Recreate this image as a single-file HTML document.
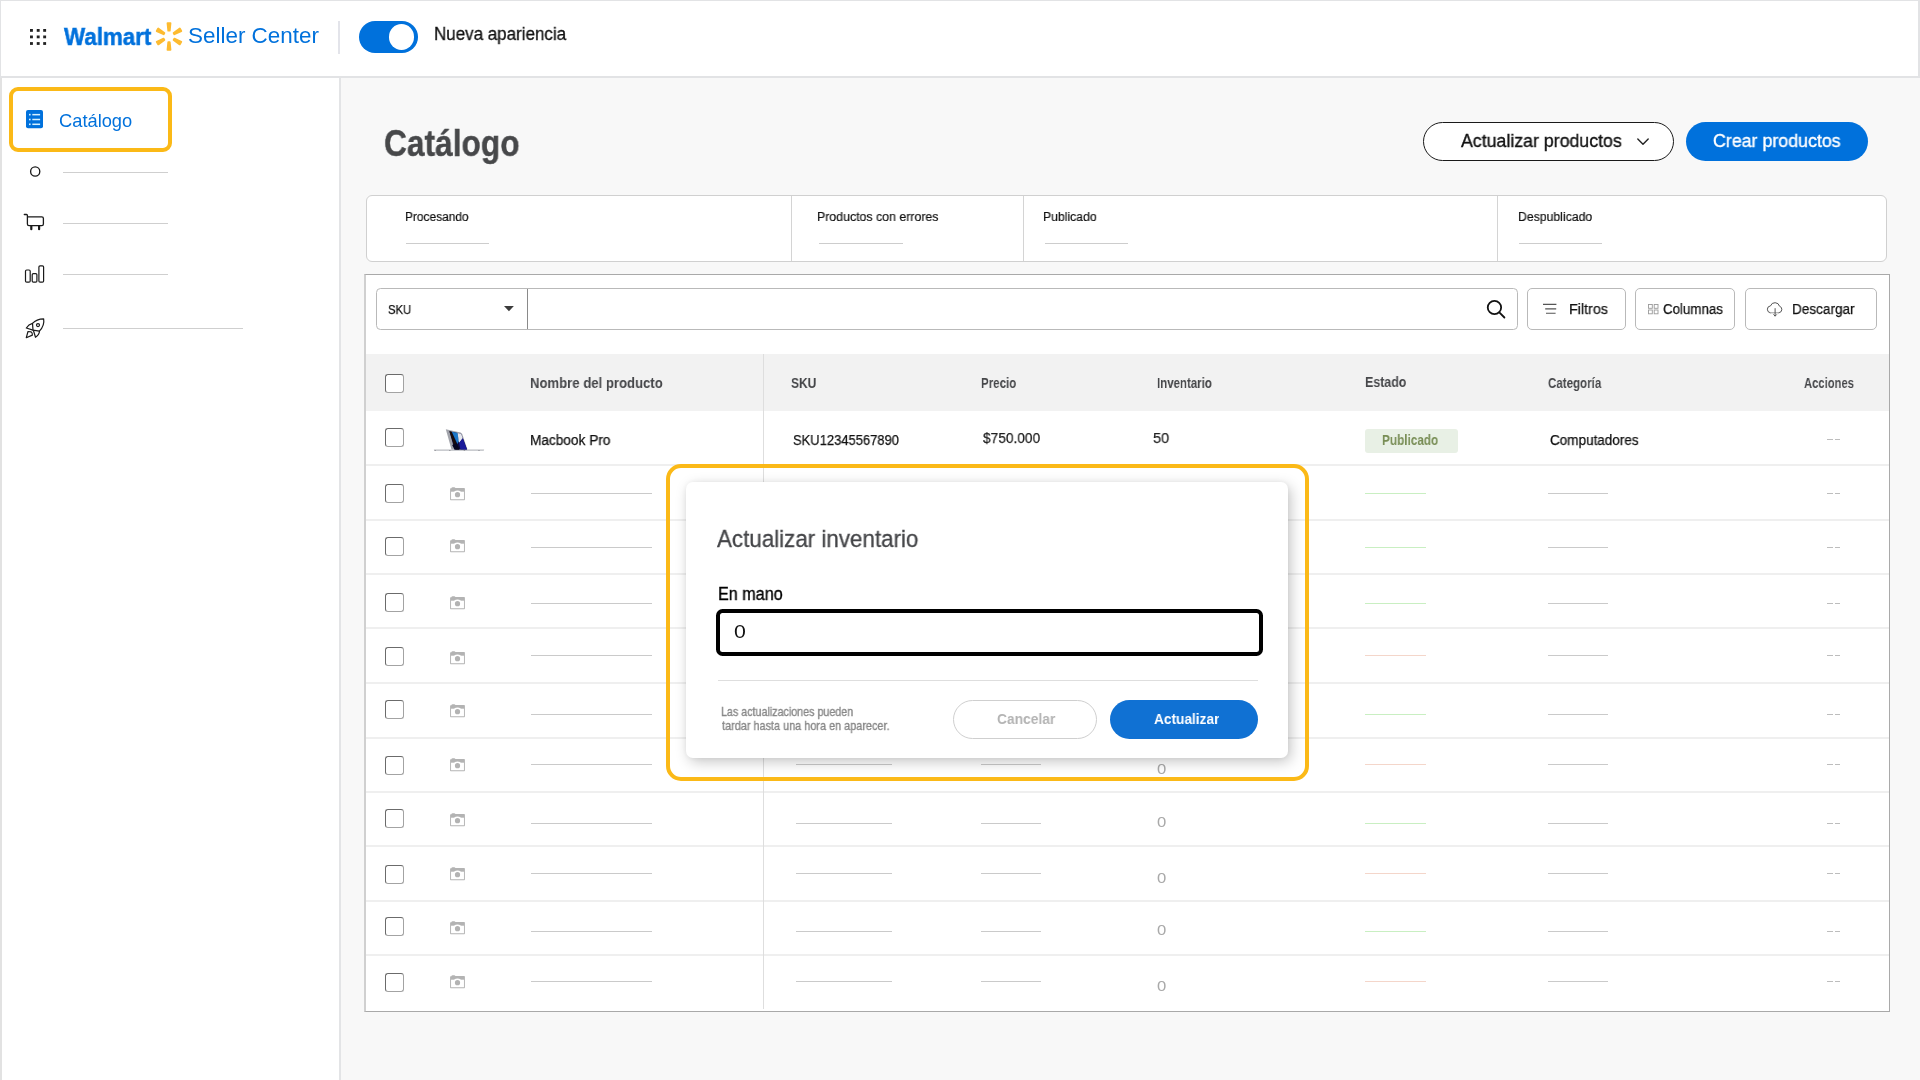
<!DOCTYPE html>
<html lang="es"><head><meta charset="utf-8"><title>Walmart Seller Center - Catálogo</title>
<style>
html,body{margin:0;padding:0;}
body{width:1920px;height:1080px;overflow:hidden;background:#f8f8f8;font-family:"Liberation Sans",sans-serif;position:relative;}
.b{position:absolute;box-sizing:border-box;}
.t{position:absolute;white-space:nowrap;transform-origin:0 0;display:block;will-change:transform;}
svg{position:absolute;overflow:visible;}
.cb{position:absolute;box-sizing:border-box;width:18.500px;height:18.700px;border:1px solid #6b6b6b;border-right-color:#a3a3a3;border-bottom-color:#a3a3a3;border-radius:3px;background:#fff;left:385px;}
</style></head><body>
<div class="b" style="left:0px;top:0px;width:1920px;height:78px;background:#fff;border:2px solid #e2e3e5;border-left-width:1px;border-top-width:1px;"></div>
<div class="b" style="left:0px;top:78px;width:341px;height:1002px;background:#fff;border-right:2px solid #e3e4e6;border-left:2px solid #e2e2e2;"></div>
<div class="b" style="left:338px;top:21px;width:2px;height:33px;background:#e3e4ea;"></div>
<svg style="left:30px;top:29.050px" width="17" height="17" fill="#222"><rect x="0" y="0" width="2.900" height="2.800"/><rect x="6.75" y="0" width="2.900" height="2.800"/><rect x="13.2" y="0" width="2.900" height="2.800"/><rect x="0" y="6.5" width="2.900" height="2.800"/><rect x="6.75" y="6.5" width="2.900" height="2.800"/><rect x="13.2" y="6.5" width="2.900" height="2.800"/><rect x="0" y="13.1" width="2.900" height="2.800"/><rect x="6.75" y="13.1" width="2.900" height="2.800"/><rect x="13.2" y="13.1" width="2.900" height="2.800"/></svg>
<span class="t" style="left:63.78px;top:25.25px;font-size:24.71px;line-height:24.71px;color:#0071dc;font-weight:700;-webkit-text-stroke:0.5px #0071dc;transform:scaleX(0.9040);">Walmart</span>
<svg style="left:0;top:0" width="200" height="76" fill="#fdbb30" stroke="#fdbb30" stroke-width="1.900" stroke-linejoin="round"><path d="M169.70 30.65L170.45 23.15L167.55 23.15L168.30 30.65z"/><path d="M174.37 34.16L181.24 31.06L179.79 28.54L173.67 32.94z"/><path d="M173.67 39.96L179.79 44.36L181.24 41.84L174.37 38.74z"/><path d="M168.30 42.25L167.55 49.75L170.45 49.75L169.70 42.25z"/><path d="M163.63 38.74L156.76 41.84L158.21 44.36L164.33 39.96z"/><path d="M164.33 32.94L158.21 28.54L156.76 31.06L163.63 34.16z"/></svg>
<span class="t" style="left:187.69px;top:25.25px;font-size:21.80px;line-height:21.80px;color:#0071dc;transform:scaleX(1.0293);">Seller Center</span>
<div class="b" style="left:359px;top:21px;width:58.5px;height:32px;background:#0071dc;border-radius:16px;"></div>
<div class="b" style="left:388.7px;top:24.3px;width:25.0px;height:25.3px;background:#fff;border-radius:50%;"></div>
<span class="t" style="left:434.11px;top:25.25px;font-size:18.17px;line-height:18.17px;color:#111;-webkit-text-stroke:0.3px #111;transform:scaleX(0.9347);">Nueva apariencia</span>
<div class="b" style="left:9px;top:87px;width:163px;height:64.5px;border:4px solid #fbb917;border-radius:9px;background:#fff;"></div>
<svg style="left:25.800px;top:109.800px" width="18" height="19" viewBox="0 0 18 19">
<rect x="0" y="0" width="17" height="18.200" rx="2" fill="#0071dc"/>
<g fill="#d6f1ff"><rect x="3" y="3.850" width="1.600" height="1.600"/><rect x="6.300" y="3.900" width="7.800" height="1.500"/>
<rect x="3" y="8.700" width="1.600" height="1.600"/><rect x="6.300" y="8.750" width="7.800" height="1.500"/>
<rect x="3" y="13.500" width="1.600" height="1.600"/><rect x="6.300" y="13.550" width="7.800" height="1.500"/></g></svg>
<span class="t" style="left:58.78px;top:112.25px;font-size:18.17px;line-height:18.17px;color:#0071dc;transform:scaleX(1.0074);">Catálogo</span>
<div class="b" style="left:62.5px;top:172px;width:105.0px;height:1px;background:#cfcfcf"></div>
<div class="b" style="left:62.5px;top:223px;width:105.0px;height:1px;background:#cfcfcf"></div>
<div class="b" style="left:62.5px;top:273.5px;width:105.0px;height:1px;background:#cfcfcf"></div>
<div class="b" style="left:62.5px;top:328px;width:180.5px;height:1px;background:#cfcfcf"></div>
<svg style="left:0;top:0" width="60" height="360" fill="none" stroke="#1a1a1a" stroke-width="1.2" stroke-linejoin="round" stroke-linecap="round"><circle cx="35.2" cy="171.5" r="4.6" stroke-width="1.350"/><path d="M24.3 214.5h2.200q.9 0 .9.900v8.600q0 1.600 1.600 1.600h12.800q1.600 0 1.600-1.600v-5.500q0-1.600-1.600-1.600H27.700" stroke-width="1.300"/><path d="M31.300 226.200v3M39.100 226.200v3" stroke-width="2.200"/><rect x="25.500" y="270" width="4.700" height="12.200" rx="1.200"/><rect x="32.200" y="273.600" width="4.700" height="8.600" rx="1.200"/><rect x="38.900" y="265.800" width="4.700" height="16.400" rx="1.200"/><path d="M43.650 318.900Q36.500 319 32.500 323.400L33 330.100L39.400 331.200Q44.800 325.500 43.650 318.900z"/><circle cx="38" cy="325.050" r="1.500"/><path d="M32.500 323.400Q28.600 324.400 26.300 328L33 330.100"/><path d="M33.500 330.800L35.500 337.300Q39.300 334.800 39.500 331.300"/><path d="M28 331.500L26.300 337.700L32.400 335.100Q32.500 332.500 31 331.800z"/></svg>
<span class="t" style="left:383.70px;top:126.25px;font-size:36.34px;line-height:36.34px;color:#47484a;font-weight:700;-webkit-text-stroke:0.4px #47484a;transform:scaleX(0.8725);">Catálogo</span>
<div class="b" style="left:1423px;top:122px;width:251px;height:38.5px;background:#fff;border:1.5px solid #1a1a1a;border-radius:20px;"></div>
<span class="t" style="left:1461.16px;top:132.25px;font-size:18.17px;line-height:18.17px;color:#111;-webkit-text-stroke:0.35px #111;transform:scaleX(0.9773);">Actualizar productos</span>
<svg style="left:1637px;top:138px" width="13" height="8" fill="none" stroke="#222" stroke-width="1.4" stroke-linecap="round" stroke-linejoin="round"><path d="M0.8 1l5.200 5.200 5.200-5.200"/></svg>
<div class="b" style="left:1686px;top:122px;width:182px;height:38.5px;background:#0071dc;border-radius:20px;"></div>
<span class="t" style="left:1712.91px;top:132.25px;font-size:18.17px;line-height:18.17px;color:#fff;-webkit-text-stroke:0.35px #fff;transform:scaleX(0.9805);">Crear productos</span>
<div class="b" style="left:366px;top:195px;width:1521px;height:67px;background:#fff;border:1px solid #d0d0d0;border-radius:6px;"></div>
<div class="b" style="left:791px;top:196px;width:1px;height:65px;background:#d4d4d4;"></div>
<div class="b" style="left:1023px;top:196px;width:1px;height:65px;background:#d4d4d4;"></div>
<div class="b" style="left:1497px;top:196px;width:1px;height:65px;background:#d4d4d4;"></div>
<span class="t" style="left:405.22px;top:210.25px;font-size:13.08px;line-height:13.08px;color:#111;-webkit-text-stroke:0.2px #111;transform:scaleX(0.9105);">Procesando</span>
<span class="t" style="left:817.29px;top:210.25px;font-size:13.08px;line-height:13.08px;color:#111;-webkit-text-stroke:0.2px #111;transform:scaleX(0.9445);">Productos con errores</span>
<span class="t" style="left:1043.40px;top:210.25px;font-size:13.08px;line-height:13.08px;color:#111;-webkit-text-stroke:0.2px #111;transform:scaleX(0.9329);">Publicado</span>
<span class="t" style="left:1518.00px;top:210.25px;font-size:13.08px;line-height:13.08px;color:#111;-webkit-text-stroke:0.2px #111;transform:scaleX(0.9362);">Despublicado</span>
<div class="b" style="left:405.5px;top:242.6px;width:83.60000000000002px;height:1px;background:#cdcdcd"></div>
<div class="b" style="left:819.4px;top:242.6px;width:83.60000000000002px;height:1px;background:#cdcdcd"></div>
<div class="b" style="left:1044.7px;top:242.6px;width:83.59999999999991px;height:1px;background:#cdcdcd"></div>
<div class="b" style="left:1518.7px;top:242.6px;width:83.59999999999991px;height:1px;background:#cdcdcd"></div>
<div class="b" style="left:364px;top:274px;width:1526px;height:738px;background:#fff;border:1px solid #a9a9a9;border-left:2px solid #d0d0d0;"></div>
<div class="b" style="left:376px;top:288px;width:1142px;height:42px;background:#fff;border:1px solid #b9b9b9;border-radius:4.500px;"></div>
<div class="b" style="left:527px;top:289px;width:1px;height:40px;background:#8a8a8a;"></div>
<span class="t" style="left:387.99px;top:303.25px;font-size:13.08px;line-height:13.08px;color:#111;-webkit-text-stroke:0.25px #111;transform:scaleX(0.8612);">SKU</span>
<svg style="left:503.800px;top:305.800px" width="12" height="7"><path d="M0 0h9.900l-4.950 5.300z" fill="#3c3c3c"/></svg>
<svg style="left:1485px;top:298px" width="24" height="24" fill="none" stroke="#111" stroke-width="1.800" stroke-linecap="round"><circle cx="9.450" cy="9.500" r="6.700"/><path d="M14.300 14.400l5.100 5.100"/></svg>
<div class="b" style="left:1527px;top:288px;width:99px;height:42px;background:#fff;border:1px solid #b9b9b9;border-radius:5px;"></div>
<div class="b" style="left:1635px;top:288px;width:100px;height:42px;background:#fff;border:1px solid #b9b9b9;border-radius:5px;"></div>
<div class="b" style="left:1745px;top:288px;width:132px;height:42px;background:#fff;border:1px solid #b9b9b9;border-radius:5px;"></div>
<svg style="left:1543px;top:303px" width="14" height="12" stroke="#555" stroke-width="1.100" fill="none"><path d="M0 1.400h13.400M2.200 5.900h11M3 10.300h9.600"/></svg>
<span class="t" style="left:1568.83px;top:302.25px;font-size:14.53px;line-height:14.53px;color:#111;-webkit-text-stroke:0.25px #111;transform:scaleX(0.9855);">Filtros</span>
<svg style="left:1648px;top:303.500px" width="11" height="11" stroke="#9a9a9a" stroke-width="0.9" fill="none"><rect x="0.500" y="0.500" width="3.800" height="3.800"/><rect x="6.200" y="0.500" width="3.800" height="3.800"/><rect x="0.500" y="6" width="3.800" height="3.800"/><rect x="6.200" y="6" width="3.800" height="3.800"/></svg>
<span class="t" style="left:1662.83px;top:302.25px;font-size:14.53px;line-height:14.53px;color:#111;-webkit-text-stroke:0.25px #111;transform:scaleX(0.9176);">Columnas</span>
<svg style="left:1766px;top:300.800px" width="17" height="17" fill="none" stroke="#555" stroke-width="1" stroke-linecap="round" stroke-linejoin="round"><path d="M4.100 11.800A3.500 3.500 0 0 1 4.500 4.900A4.700 4.700 0 0 1 13.500 5.200A3.400 3.400 0 0 1 12.900 11.800" /><path d="M4.100 11.800H12.900" stroke="#9a9a9a"/><path d="M9.100 7.600v7.300M7.700 13.700l1.400 1.400 1.400-1.400"/></svg>
<span class="t" style="left:1791.58px;top:302.25px;font-size:14.53px;line-height:14.53px;color:#111;-webkit-text-stroke:0.25px #111;transform:scaleX(0.9356);">Descargar</span>
<div class="b" style="left:366px;top:354px;width:1523px;height:57px;background:#f2f2f2;"></div>
<span class="t" style="left:530.43px;top:376.25px;font-size:14.53px;line-height:14.53px;color:#46474a;font-weight:700;transform:scaleX(0.9041);">Nombre del producto</span>
<span class="t" style="left:790.57px;top:376.25px;font-size:14.53px;line-height:14.53px;color:#46474a;font-weight:700;transform:scaleX(0.8230);">SKU</span>
<span class="t" style="left:980.64px;top:376.25px;font-size:14.53px;line-height:14.53px;color:#46474a;font-weight:700;transform:scaleX(0.7947);">Precio</span>
<span class="t" style="left:1157.14px;top:376.25px;font-size:14.53px;line-height:14.53px;color:#46474a;font-weight:700;transform:scaleX(0.7904);">Inventario</span>
<span class="t" style="left:1364.88px;top:375.25px;font-size:14.53px;line-height:14.53px;color:#46474a;font-weight:700;transform:scaleX(0.8544);">Estado</span>
<span class="t" style="left:1547.63px;top:376.25px;font-size:14.53px;line-height:14.53px;color:#46474a;font-weight:700;transform:scaleX(0.7950);">Categoría</span>
<span class="t" style="left:1804.13px;top:376.25px;font-size:14.53px;line-height:14.53px;color:#46474a;font-weight:700;transform:scaleX(0.7725);">Acciones</span>
<div class="b" style="left:366px;top:464px;width:1523px;height:2px;background:#efefef"></div>
<div class="b" style="left:366px;top:519px;width:1523px;height:2px;background:#efefef"></div>
<div class="b" style="left:366px;top:573px;width:1523px;height:2px;background:#efefef"></div>
<div class="b" style="left:366px;top:627px;width:1523px;height:2px;background:#efefef"></div>
<div class="b" style="left:366px;top:682px;width:1523px;height:2px;background:#efefef"></div>
<div class="b" style="left:366px;top:737px;width:1523px;height:2px;background:#efefef"></div>
<div class="b" style="left:366px;top:791px;width:1523px;height:2px;background:#efefef"></div>
<div class="b" style="left:366px;top:845px;width:1523px;height:2px;background:#efefef"></div>
<div class="b" style="left:366px;top:900px;width:1523px;height:2px;background:#efefef"></div>
<div class="b" style="left:366px;top:954px;width:1523px;height:2px;background:#efefef"></div>
<div class="b" style="left:763px;top:354px;width:1px;height:655px;background:#dedede;"></div>
<div class="cb" style="top:374.3px"></div>
<div class="cb" style="top:428.3px"></div>
<div class="cb" style="top:484.2px"></div>
<div class="cb" style="top:537.2px"></div>
<div class="cb" style="top:593px"></div>
<div class="cb" style="top:647.2px"></div>
<div class="cb" style="top:700.3px"></div>
<div class="cb" style="top:756px"></div>
<div class="cb" style="top:809px"></div>
<div class="cb" style="top:865px"></div>
<div class="cb" style="top:917px"></div>
<div class="cb" style="top:973px"></div>
<span class="t" style="left:530.18px;top:434.25px;font-size:13.95px;line-height:13.95px;color:#111;-webkit-text-stroke:0.25px #111;transform:scaleX(0.9803);">Macbook Pro</span>
<span class="t" style="left:792.92px;top:434.25px;font-size:13.95px;line-height:13.95px;color:#111;-webkit-text-stroke:0.25px #111;transform:scaleX(0.9292);">SKU12345567890</span>
<span class="t" style="left:982.76px;top:430.25px;font-size:15.41px;line-height:15.41px;color:#222;-webkit-text-stroke:0.25px #222;transform:scaleX(0.8894);">$750.000</span>
<span class="t" style="left:1152.62px;top:430.25px;font-size:15.41px;line-height:15.41px;color:#222;-webkit-text-stroke:0.25px #222;transform:scaleX(0.9478);">50</span>
<div class="b" style="left:1365px;top:429px;width:93px;height:24px;background:#e8f0e5;border-radius:3px;"></div>
<span class="t" style="left:1382.02px;top:434.25px;font-size:13.81px;line-height:13.81px;color:#788d55;font-weight:700;transform:scaleX(0.8522);">Publicado</span>
<span class="t" style="left:1550.02px;top:434.25px;font-size:13.95px;line-height:13.95px;color:#111;-webkit-text-stroke:0.25px #111;transform:scaleX(0.9688);">Computadores</span>
<svg style="left:432px;top:426px" width="56" height="28" viewBox="0 0 56 28">
<path d="M1.800 23.500h50.400l-.5 1.300H2.300z" fill="#b9bbc0"/>
<path d="M2.500 24.500h49" stroke="#6a6c72" stroke-width="0.500" stroke-dasharray="1.400 13.200"/>
<g transform="translate(0,3.200) scale(1,0.940) translate(0,-2.600)">
<path d="M13.800 2.600l14.800 3.400 1.600 1.600L35.500 24.300h-16z" fill="#a2a4ab"/>
<path d="M17.400 4.800l11.800 2.600 5.800 16.900H22.500z" fill="#0a0a3c"/>
<path d="M17.400 4.800l2.200.5 7.600 18.900H23.500z" fill="#1a0d08"/>
<path d="M19.800 5.300l5.800 1.300 1.400 8.400-1.600 3.400z" fill="#1c78c8"/>
<path d="M25.600 6.600l3.600.8 1.600 4.800-3.800 5.200z" fill="#e4e6ee"/>
<path d="M30.800 12.200l4.200 12.100h-6.500l-1.500-6.900z" fill="#1a1a9a"/>
<path d="M24.500 17.500l3 6.800h-5l-2.300-5z" fill="#05051e"/>
</g>
</svg>
<svg style="left:450px;top:486.9px" width="15" height="14" viewBox="0 0 15 14"><path d="M1.400 1.300Q1.500 .2 2.600 .2h1.600Q5.200 .2 5.400 1.100H14.200q.7 0 .7.700v10.700q0 .7-.7.700H.8q-.7 0-.7-.7V1.800q0-.6.700-.6z" fill="#b3b3b3"/><rect x="1.050" y="4.700" width="12.900" height="7.550" fill="#fff"/><circle cx="7.500" cy="7.700" r="4.100" fill="#fff"/><circle cx="7.500" cy="7.700" r="2.600" fill="#b3b3b3"/></svg>
<div class="b" style="left:531px;top:493px;width:121px;height:1.2px;background:#cacaca"></div>
<div class="b" style="left:796px;top:493px;width:95.5px;height:1.2px;background:#cacaca"></div>
<div class="b" style="left:980.5px;top:493px;width:60.5px;height:1.2px;background:#cacaca"></div>
<div class="b" style="left:1365px;top:493px;width:61px;height:1.2px;background:#c9efc2"></div>
<div class="b" style="left:1547.7px;top:493px;width:60.59999999999991px;height:1.2px;background:#cacaca"></div>
<svg style="left:450px;top:539.3px" width="15" height="14" viewBox="0 0 15 14"><path d="M1.400 1.300Q1.500 .2 2.600 .2h1.600Q5.200 .2 5.400 1.100H14.200q.7 0 .7.700v10.700q0 .7-.7.700H.8q-.7 0-.7-.7V1.800q0-.6.700-.6z" fill="#b3b3b3"/><rect x="1.050" y="4.700" width="12.900" height="7.550" fill="#fff"/><circle cx="7.500" cy="7.700" r="4.100" fill="#fff"/><circle cx="7.500" cy="7.700" r="2.600" fill="#b3b3b3"/></svg>
<div class="b" style="left:531px;top:546.7px;width:121px;height:1.2px;background:#cacaca"></div>
<div class="b" style="left:796px;top:546.7px;width:95.5px;height:1.2px;background:#cacaca"></div>
<div class="b" style="left:980.5px;top:546.7px;width:60.5px;height:1.2px;background:#cacaca"></div>
<div class="b" style="left:1365px;top:546.7px;width:61px;height:1.2px;background:#c9efc2"></div>
<div class="b" style="left:1547.7px;top:546.7px;width:60.59999999999991px;height:1.2px;background:#cacaca"></div>
<svg style="left:450px;top:595.6999999999999px" width="15" height="14" viewBox="0 0 15 14"><path d="M1.400 1.300Q1.500 .2 2.600 .2h1.600Q5.200 .2 5.400 1.100H14.200q.7 0 .7.700v10.700q0 .7-.7.700H.8q-.7 0-.7-.7V1.800q0-.6.700-.6z" fill="#b3b3b3"/><rect x="1.050" y="4.700" width="12.900" height="7.550" fill="#fff"/><circle cx="7.500" cy="7.700" r="4.100" fill="#fff"/><circle cx="7.500" cy="7.700" r="2.600" fill="#b3b3b3"/></svg>
<div class="b" style="left:531px;top:602.7px;width:121px;height:1.2px;background:#cacaca"></div>
<div class="b" style="left:796px;top:602.7px;width:95.5px;height:1.2px;background:#cacaca"></div>
<div class="b" style="left:980.5px;top:602.7px;width:60.5px;height:1.2px;background:#cacaca"></div>
<div class="b" style="left:1365px;top:602.7px;width:61px;height:1.2px;background:#c9efc2"></div>
<div class="b" style="left:1547.7px;top:602.7px;width:60.59999999999991px;height:1.2px;background:#cacaca"></div>
<svg style="left:450px;top:651.1999999999999px" width="15" height="14" viewBox="0 0 15 14"><path d="M1.400 1.300Q1.500 .2 2.600 .2h1.600Q5.200 .2 5.400 1.100H14.200q.7 0 .7.700v10.700q0 .7-.7.700H.8q-.7 0-.7-.7V1.800q0-.6.700-.6z" fill="#b3b3b3"/><rect x="1.050" y="4.700" width="12.900" height="7.550" fill="#fff"/><circle cx="7.500" cy="7.700" r="4.100" fill="#fff"/><circle cx="7.500" cy="7.700" r="2.600" fill="#b3b3b3"/></svg>
<div class="b" style="left:531px;top:655px;width:121px;height:1.2px;background:#cacaca"></div>
<div class="b" style="left:796px;top:655px;width:95.5px;height:1.2px;background:#cacaca"></div>
<div class="b" style="left:980.5px;top:655px;width:60.5px;height:1.2px;background:#cacaca"></div>
<div class="b" style="left:1365px;top:655px;width:61px;height:1.2px;background:#f4d6ca"></div>
<div class="b" style="left:1547.7px;top:655px;width:60.59999999999991px;height:1.2px;background:#cacaca"></div>
<svg style="left:450px;top:703.9px" width="15" height="14" viewBox="0 0 15 14"><path d="M1.400 1.300Q1.500 .2 2.600 .2h1.600Q5.200 .2 5.400 1.100H14.200q.7 0 .7.700v10.700q0 .7-.7.700H.8q-.7 0-.7-.7V1.800q0-.6.700-.6z" fill="#b3b3b3"/><rect x="1.050" y="4.700" width="12.900" height="7.550" fill="#fff"/><circle cx="7.500" cy="7.700" r="4.100" fill="#fff"/><circle cx="7.500" cy="7.700" r="2.600" fill="#b3b3b3"/></svg>
<div class="b" style="left:531px;top:714px;width:121px;height:1.2px;background:#cacaca"></div>
<div class="b" style="left:796px;top:714px;width:95.5px;height:1.2px;background:#cacaca"></div>
<div class="b" style="left:980.5px;top:714px;width:60.5px;height:1.2px;background:#cacaca"></div>
<div class="b" style="left:1365px;top:714px;width:61px;height:1.2px;background:#c9efc2"></div>
<div class="b" style="left:1547.7px;top:714px;width:60.59999999999991px;height:1.2px;background:#cacaca"></div>
<svg style="left:450px;top:758.1999999999999px" width="15" height="14" viewBox="0 0 15 14"><path d="M1.400 1.300Q1.500 .2 2.600 .2h1.600Q5.200 .2 5.400 1.100H14.200q.7 0 .7.700v10.700q0 .7-.7.700H.8q-.7 0-.7-.7V1.800q0-.6.700-.6z" fill="#b3b3b3"/><rect x="1.050" y="4.700" width="12.900" height="7.550" fill="#fff"/><circle cx="7.500" cy="7.700" r="4.100" fill="#fff"/><circle cx="7.500" cy="7.700" r="2.600" fill="#b3b3b3"/></svg>
<div class="b" style="left:531px;top:764px;width:121px;height:1.2px;background:#cacaca"></div>
<div class="b" style="left:796px;top:764px;width:95.5px;height:1.2px;background:#cacaca"></div>
<div class="b" style="left:980.5px;top:764px;width:60.5px;height:1.2px;background:#cacaca"></div>
<div class="b" style="left:1365px;top:764px;width:61px;height:1.2px;background:#f4d6ca"></div>
<div class="b" style="left:1547.7px;top:764px;width:60.59999999999991px;height:1.2px;background:#cacaca"></div>
<span class="t" style="left:1156.65px;top:762.25px;font-size:14.97px;line-height:14.97px;color:#a9a9a9;transform:scaleX(1.1156);">0</span>
<svg style="left:450px;top:812.6999999999999px" width="15" height="14" viewBox="0 0 15 14"><path d="M1.400 1.300Q1.500 .2 2.600 .2h1.600Q5.200 .2 5.400 1.100H14.200q.7 0 .7.700v10.700q0 .7-.7.700H.8q-.7 0-.7-.7V1.800q0-.6.700-.6z" fill="#b3b3b3"/><rect x="1.050" y="4.700" width="12.900" height="7.550" fill="#fff"/><circle cx="7.500" cy="7.700" r="4.100" fill="#fff"/><circle cx="7.500" cy="7.700" r="2.600" fill="#b3b3b3"/></svg>
<div class="b" style="left:531px;top:823px;width:121px;height:1.2px;background:#cacaca"></div>
<div class="b" style="left:796px;top:823px;width:95.5px;height:1.2px;background:#cacaca"></div>
<div class="b" style="left:980.5px;top:823px;width:60.5px;height:1.2px;background:#cacaca"></div>
<div class="b" style="left:1365px;top:823px;width:61px;height:1.2px;background:#c9efc2"></div>
<div class="b" style="left:1547.7px;top:823px;width:60.59999999999991px;height:1.2px;background:#cacaca"></div>
<span class="t" style="left:1156.65px;top:815.25px;font-size:14.97px;line-height:14.97px;color:#a9a9a9;transform:scaleX(1.1156);">0</span>
<svg style="left:450px;top:866.9px" width="15" height="14" viewBox="0 0 15 14"><path d="M1.400 1.300Q1.500 .2 2.600 .2h1.600Q5.200 .2 5.400 1.100H14.200q.7 0 .7.700v10.700q0 .7-.7.700H.8q-.7 0-.7-.7V1.800q0-.6.700-.6z" fill="#b3b3b3"/><rect x="1.050" y="4.700" width="12.900" height="7.550" fill="#fff"/><circle cx="7.500" cy="7.700" r="4.100" fill="#fff"/><circle cx="7.500" cy="7.700" r="2.600" fill="#b3b3b3"/></svg>
<div class="b" style="left:531px;top:872.7px;width:121px;height:1.2px;background:#cacaca"></div>
<div class="b" style="left:796px;top:872.7px;width:95.5px;height:1.2px;background:#cacaca"></div>
<div class="b" style="left:980.5px;top:872.7px;width:60.5px;height:1.2px;background:#cacaca"></div>
<div class="b" style="left:1365px;top:872.7px;width:61px;height:1.2px;background:#f4d6ca"></div>
<div class="b" style="left:1547.7px;top:872.7px;width:60.59999999999991px;height:1.2px;background:#cacaca"></div>
<span class="t" style="left:1156.65px;top:871.25px;font-size:14.97px;line-height:14.97px;color:#a9a9a9;transform:scaleX(1.1156);">0</span>
<svg style="left:450px;top:920.9px" width="15" height="14" viewBox="0 0 15 14"><path d="M1.400 1.300Q1.500 .2 2.600 .2h1.600Q5.200 .2 5.400 1.100H14.200q.7 0 .7.700v10.700q0 .7-.7.700H.8q-.7 0-.7-.7V1.800q0-.6.700-.6z" fill="#b3b3b3"/><rect x="1.050" y="4.700" width="12.900" height="7.550" fill="#fff"/><circle cx="7.500" cy="7.700" r="4.100" fill="#fff"/><circle cx="7.500" cy="7.700" r="2.600" fill="#b3b3b3"/></svg>
<div class="b" style="left:531px;top:931.3px;width:121px;height:1.2px;background:#cacaca"></div>
<div class="b" style="left:796px;top:931.3px;width:95.5px;height:1.2px;background:#cacaca"></div>
<div class="b" style="left:980.5px;top:931.3px;width:60.5px;height:1.2px;background:#cacaca"></div>
<div class="b" style="left:1365px;top:931.3px;width:61px;height:1.2px;background:#c9efc2"></div>
<div class="b" style="left:1547.7px;top:931.3px;width:60.59999999999991px;height:1.2px;background:#cacaca"></div>
<span class="t" style="left:1156.65px;top:923.25px;font-size:14.97px;line-height:14.97px;color:#a9a9a9;transform:scaleX(1.1156);">0</span>
<svg style="left:450px;top:975.1999999999999px" width="15" height="14" viewBox="0 0 15 14"><path d="M1.400 1.300Q1.500 .2 2.600 .2h1.600Q5.200 .2 5.400 1.100H14.200q.7 0 .7.700v10.700q0 .7-.7.700H.8q-.7 0-.7-.7V1.800q0-.6.700-.6z" fill="#b3b3b3"/><rect x="1.050" y="4.700" width="12.900" height="7.550" fill="#fff"/><circle cx="7.500" cy="7.700" r="4.100" fill="#fff"/><circle cx="7.500" cy="7.700" r="2.600" fill="#b3b3b3"/></svg>
<div class="b" style="left:531px;top:981px;width:121px;height:1.2px;background:#cacaca"></div>
<div class="b" style="left:796px;top:981px;width:95.5px;height:1.2px;background:#cacaca"></div>
<div class="b" style="left:980.5px;top:981px;width:60.5px;height:1.2px;background:#cacaca"></div>
<div class="b" style="left:1365px;top:981px;width:61px;height:1.2px;background:#f4d6ca"></div>
<div class="b" style="left:1547.7px;top:981px;width:60.59999999999991px;height:1.2px;background:#cacaca"></div>
<span class="t" style="left:1156.65px;top:979.25px;font-size:14.97px;line-height:14.97px;color:#a9a9a9;transform:scaleX(1.1156);">0</span>
<div class="b" style="left:1827px;top:439px;width:5.5px;height:1.2px;background:#bdbdbd"></div>
<div class="b" style="left:1834.5px;top:439px;width:5.5px;height:1.2px;background:#bdbdbd"></div>
<div class="b" style="left:1827px;top:493.3px;width:5.5px;height:1.2px;background:#bdbdbd"></div>
<div class="b" style="left:1834.5px;top:493.3px;width:5.5px;height:1.2px;background:#bdbdbd"></div>
<div class="b" style="left:1827px;top:546.7px;width:5.5px;height:1.2px;background:#bdbdbd"></div>
<div class="b" style="left:1834.5px;top:546.7px;width:5.5px;height:1.2px;background:#bdbdbd"></div>
<div class="b" style="left:1827px;top:602.7px;width:5.5px;height:1.2px;background:#bdbdbd"></div>
<div class="b" style="left:1834.5px;top:602.7px;width:5.5px;height:1.2px;background:#bdbdbd"></div>
<div class="b" style="left:1827px;top:655px;width:5.5px;height:1.2px;background:#bdbdbd"></div>
<div class="b" style="left:1834.5px;top:655px;width:5.5px;height:1.2px;background:#bdbdbd"></div>
<div class="b" style="left:1827px;top:714px;width:5.5px;height:1.2px;background:#bdbdbd"></div>
<div class="b" style="left:1834.5px;top:714px;width:5.5px;height:1.2px;background:#bdbdbd"></div>
<div class="b" style="left:1827px;top:764px;width:5.5px;height:1.2px;background:#bdbdbd"></div>
<div class="b" style="left:1834.5px;top:764px;width:5.5px;height:1.2px;background:#bdbdbd"></div>
<div class="b" style="left:1827px;top:823px;width:5.5px;height:1.2px;background:#bdbdbd"></div>
<div class="b" style="left:1834.5px;top:823px;width:5.5px;height:1.2px;background:#bdbdbd"></div>
<div class="b" style="left:1827px;top:872.7px;width:5.5px;height:1.2px;background:#bdbdbd"></div>
<div class="b" style="left:1834.5px;top:872.7px;width:5.5px;height:1.2px;background:#bdbdbd"></div>
<div class="b" style="left:1827px;top:931.3px;width:5.5px;height:1.2px;background:#bdbdbd"></div>
<div class="b" style="left:1834.5px;top:931.3px;width:5.5px;height:1.2px;background:#bdbdbd"></div>
<div class="b" style="left:1827px;top:981px;width:5.5px;height:1.2px;background:#bdbdbd"></div>
<div class="b" style="left:1834.5px;top:981px;width:5.5px;height:1.2px;background:#bdbdbd"></div>
<div class="b" style="left:666px;top:464px;width:643.3px;height:316.5px;border:4.500px solid #fbb917;border-radius:15px;"></div>
<div class="b" style="left:686.4px;top:482.3px;width:601.4px;height:275.90000000000003px;background:#fff;border-radius:7px;box-shadow:3px 4px 14px rgba(0,0,0,0.22),0 0 6px rgba(0,0,0,0.06);"></div>
<span class="t" style="left:717.16px;top:528.25px;font-size:23.69px;line-height:23.69px;color:#444548;-webkit-text-stroke:0.3px #444548;transform:scaleX(0.9444);">Actualizar inventario</span>
<span class="t" style="left:717.57px;top:586.25px;font-size:17.73px;line-height:17.73px;color:#000;-webkit-text-stroke:0.35px #000;transform:scaleX(0.9130);">En mano</span>
<div class="b" style="left:715.6px;top:608.9px;width:547.1999999999999px;height:47.0px;border:4px solid #000;border-radius:6.500px;background:#fff;"></div>
<span class="t" style="left:733.97px;top:623.25px;font-size:18.31px;line-height:18.31px;color:#111;transform:scaleX(1.1627);">0</span>
<div class="b" style="left:718px;top:680px;width:539.5999999999999px;height:1px;background:#dedede"></div>
<span class="t" style="left:721.42px;top:706.25px;font-size:12.35px;line-height:12.35px;color:#878787;-webkit-text-stroke:0.35px #878787;transform:scaleX(0.8674);">Las actualizaciones pueden</span>
<span class="t" style="left:722.14px;top:720.25px;font-size:12.35px;line-height:12.35px;color:#878787;-webkit-text-stroke:0.35px #878787;transform:scaleX(0.8812);">tardar hasta una hora en aparecer.</span>
<div class="b" style="left:953px;top:700.4px;width:144px;height:38.39999999999998px;background:#fff;border:1px solid #cfcfcf;border-radius:20px;"></div>
<span class="t" style="left:997.23px;top:711.25px;font-size:15.26px;line-height:15.26px;color:#b3b3b3;font-weight:700;transform:scaleX(0.9053);">Cancelar</span>
<div class="b" style="left:1109.8px;top:700.4px;width:147.79999999999995px;height:38.39999999999998px;background:#1071d3;border-radius:20px;"></div>
<span class="t" style="left:1153.77px;top:711.25px;font-size:15.26px;line-height:15.26px;color:#fff;font-weight:700;transform:scaleX(0.8970);">Actualizar</span>
</body></html>
